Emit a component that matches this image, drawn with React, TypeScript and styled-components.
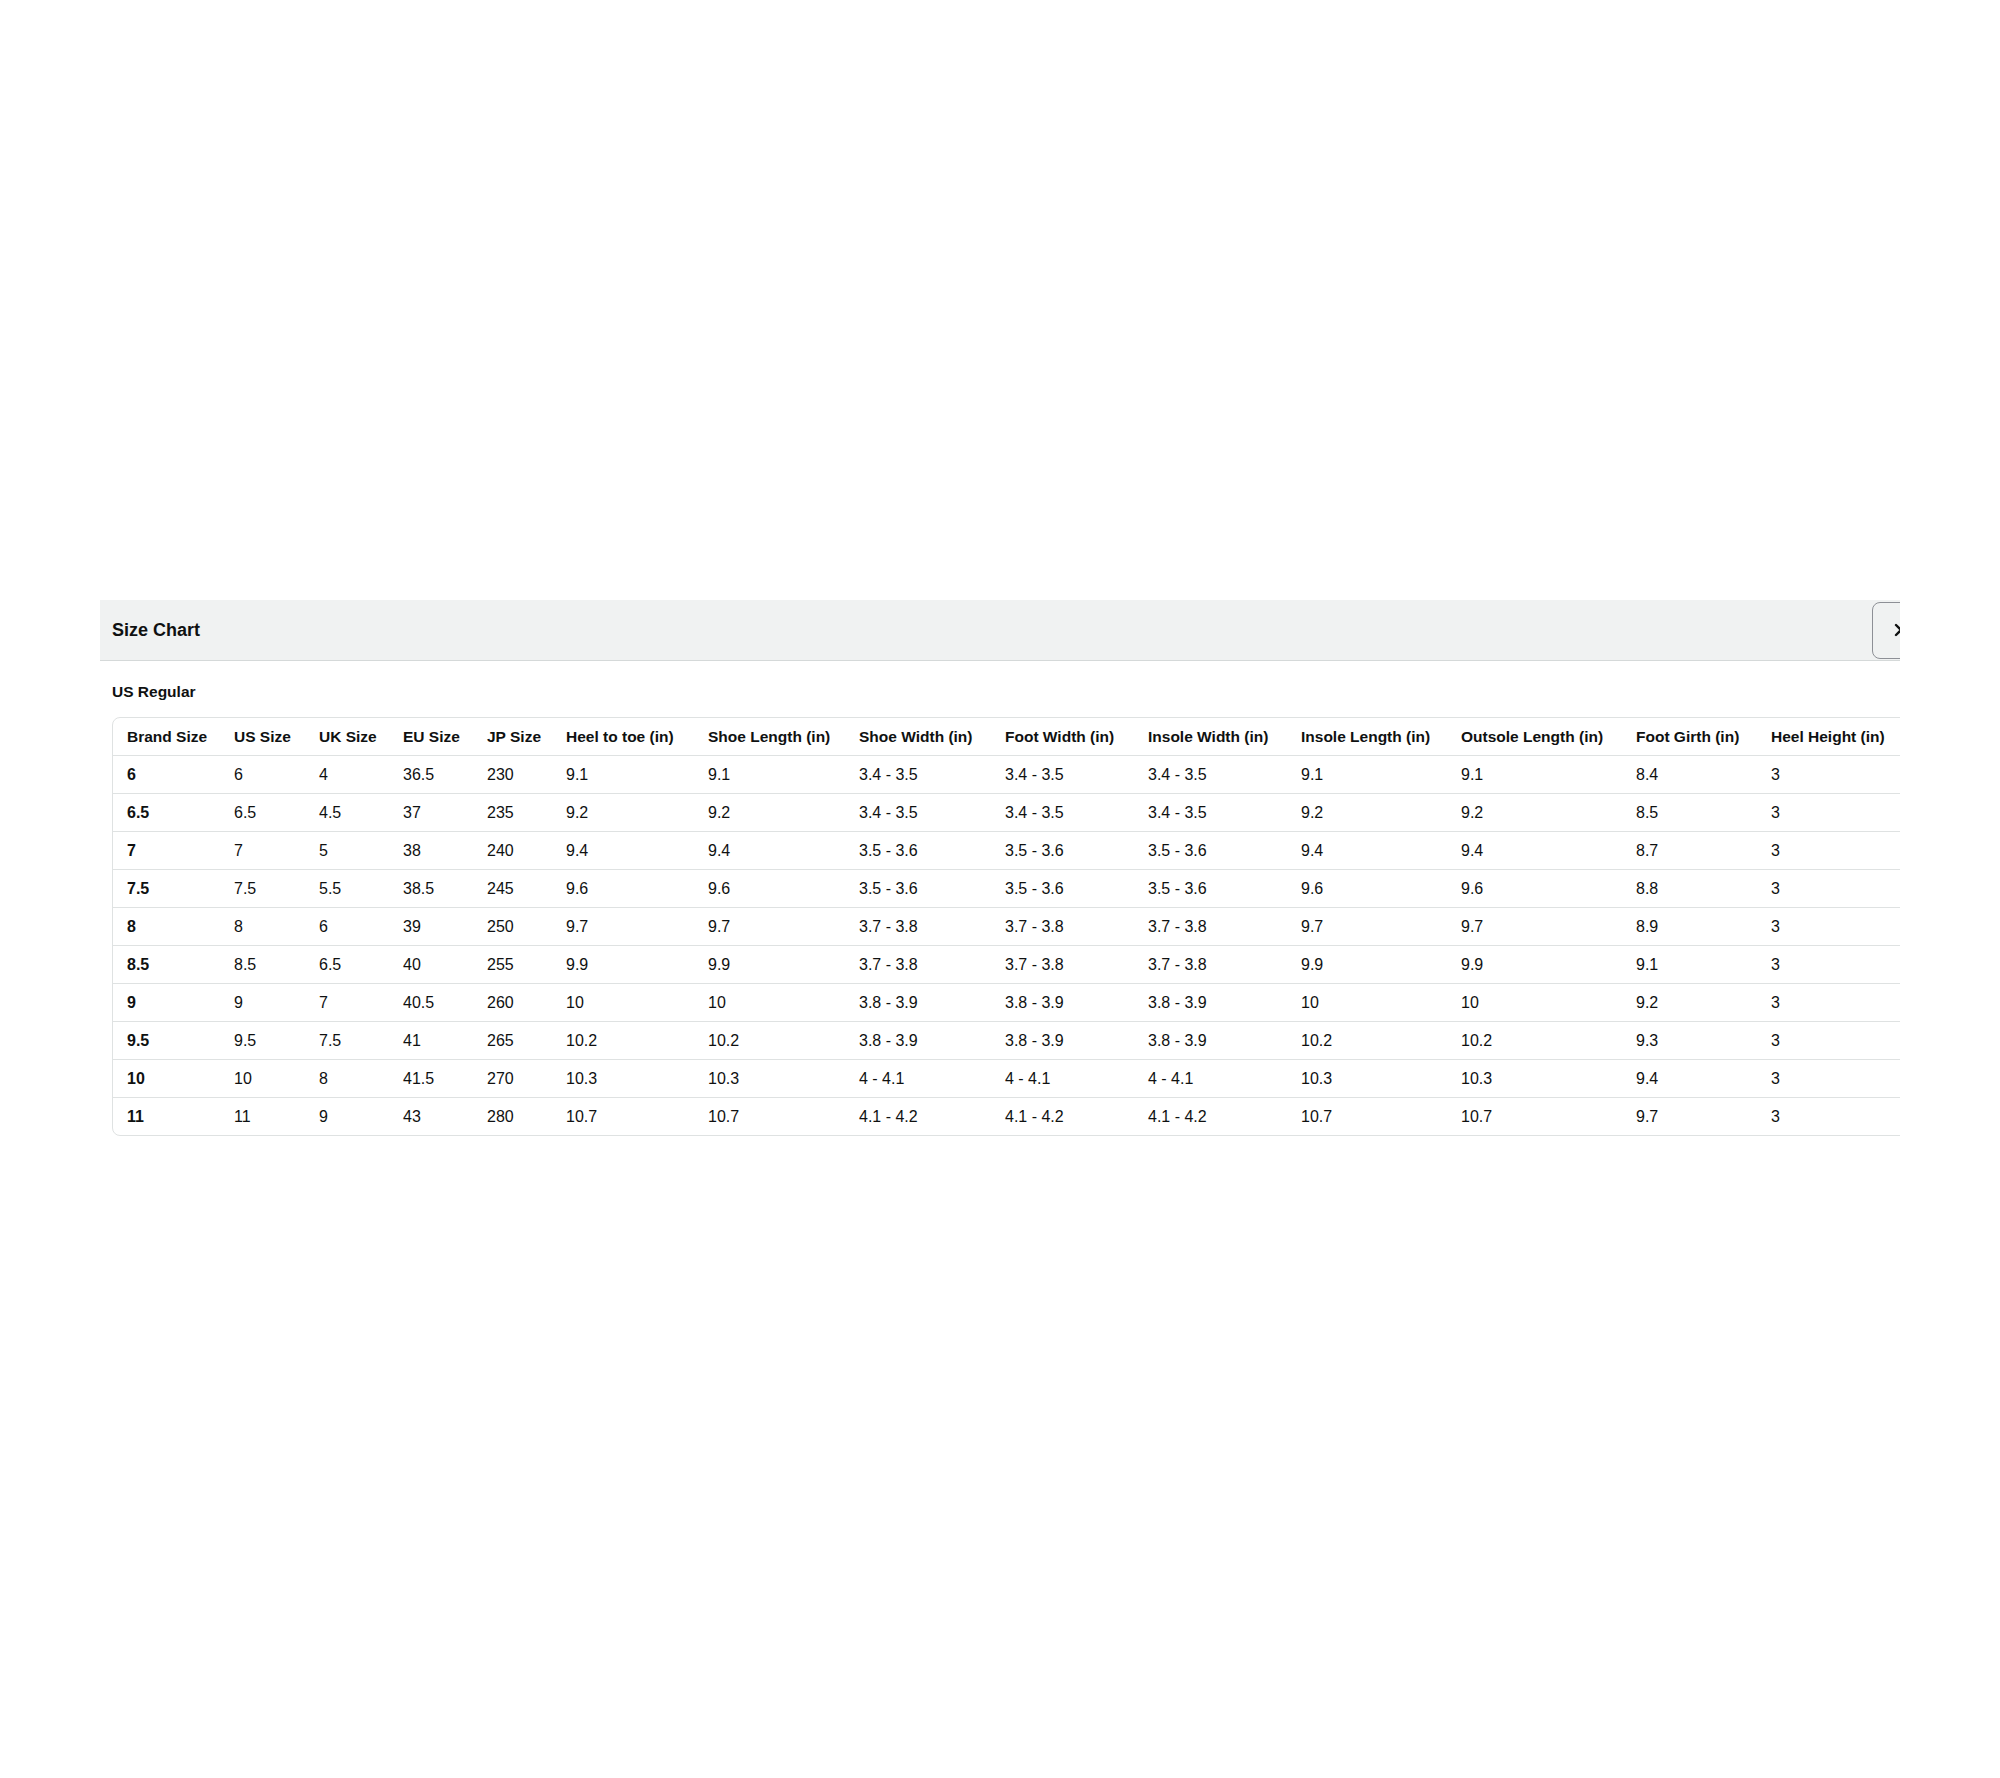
import React from "react";
import styled, { createGlobalStyle } from "styled-components";

const GlobalStyle = createGlobalStyle`
  html, body {
    margin: 0;
    padding: 0;
    background: #ffffff;
  }
  body {
    font-family: "Liberation Sans", Arial, sans-serif;
    color: #0f1111;
  }
`;

const Page = styled.div`
  box-sizing: border-box;
  width: 2000px;
  height: 1778px;
  padding: 600px 0 0 100px;
  background: #ffffff;
  overflow: hidden;
`;

const Viewport = styled.div`
  width: 1800px;
  overflow: hidden;
`;

const Modal = styled.section`
  width: 1832px;
  display: flex;
  flex-direction: column;
`;

const Header = styled.header`
  display: flex;
  align-items: center;
  justify-content: space-between;
  height: 60px;
  padding: 0 3px 0 12px;
  background: #f0f2f2;
  border-bottom: 1px solid #d5d9d9;
`;

const Title = styled.h2`
  margin: 0;
  font-size: 18px;
  line-height: 24px;
  font-weight: 700;
  color: #0f1111;
`;

const CloseButton = styled.button`
  width: 57px;
  height: 57px;
  padding: 0;
  display: flex;
  align-items: center;
  justify-content: center;
  background: #f0f2f2;
  border: 1.5px solid #8d9096;
  border-radius: 8px;
  color: #0f1111;
  cursor: pointer;
`;

const Body = styled.div`
  padding: 21px 0 40px 12px;
`;

const SectionTitle = styled.h3`
  margin: 0 0 15px;
  font-size: 15.5px;
  line-height: 20px;
  font-weight: 700;
  color: #0f1111;
`;

const Table = styled.table`
  border-collapse: separate;
  border-spacing: 0;
  table-layout: fixed;
  border: 1px solid #dfe2e2;
  border-radius: 8px;
`;

const HeadCell = styled.th`
  padding: 8.5px 14px;
  line-height: 20px;
  font-size: 15.5px;
  font-weight: 700;
  text-align: left;
  white-space: nowrap;
  color: #0f1111;
  border-bottom: 1px solid #dfe2e2;
`;

const Row = styled.tr`
  &:last-child td {
    border-bottom: none;
  }
`;

const Cell = styled.td<{ $strong?: boolean }>`
  padding: 8.5px 14px;
  line-height: 20px;
  font-size: 16px;
  font-weight: ${(p) => (p.$strong ? 700 : 400)};
  text-align: left;
  white-space: nowrap;
  color: #0f1111;
  border-bottom: 1px solid #dfe2e2;
`;

const columns: { label: string; width: number }[] = [
  { label: "Brand Size", width: 107 },
  { label: "US Size", width: 85 },
  { label: "UK Size", width: 84 },
  { label: "EU Size", width: 84 },
  { label: "JP Size", width: 79 },
  { label: "Heel to toe (in)", width: 142 },
  { label: "Shoe Length (in)", width: 151 },
  { label: "Shoe Width (in)", width: 146 },
  { label: "Foot Width (in)", width: 143 },
  { label: "Insole Width (in)", width: 153 },
  { label: "Insole Length (in)", width: 160 },
  { label: "Outsole Length (in)", width: 175 },
  { label: "Foot Girth (in)", width: 135 },
  { label: "Heel Height (in)", width: 160 },
];

const rows: string[][] = [
  ["6", "6", "4", "36.5", "230", "9.1", "9.1", "3.4 - 3.5", "3.4 - 3.5", "3.4 - 3.5", "9.1", "9.1", "8.4", "3"],
  ["6.5", "6.5", "4.5", "37", "235", "9.2", "9.2", "3.4 - 3.5", "3.4 - 3.5", "3.4 - 3.5", "9.2", "9.2", "8.5", "3"],
  ["7", "7", "5", "38", "240", "9.4", "9.4", "3.5 - 3.6", "3.5 - 3.6", "3.5 - 3.6", "9.4", "9.4", "8.7", "3"],
  ["7.5", "7.5", "5.5", "38.5", "245", "9.6", "9.6", "3.5 - 3.6", "3.5 - 3.6", "3.5 - 3.6", "9.6", "9.6", "8.8", "3"],
  ["8", "8", "6", "39", "250", "9.7", "9.7", "3.7 - 3.8", "3.7 - 3.8", "3.7 - 3.8", "9.7", "9.7", "8.9", "3"],
  ["8.5", "8.5", "6.5", "40", "255", "9.9", "9.9", "3.7 - 3.8", "3.7 - 3.8", "3.7 - 3.8", "9.9", "9.9", "9.1", "3"],
  ["9", "9", "7", "40.5", "260", "10", "10", "3.8 - 3.9", "3.8 - 3.9", "3.8 - 3.9", "10", "10", "9.2", "3"],
  ["9.5", "9.5", "7.5", "41", "265", "10.2", "10.2", "3.8 - 3.9", "3.8 - 3.9", "3.8 - 3.9", "10.2", "10.2", "9.3", "3"],
  ["10", "10", "8", "41.5", "270", "10.3", "10.3", "4 - 4.1", "4 - 4.1", "4 - 4.1", "10.3", "10.3", "9.4", "3"],
  ["11", "11", "9", "43", "280", "10.7", "10.7", "4.1 - 4.2", "4.1 - 4.2", "4.1 - 4.2", "10.7", "10.7", "9.7", "3"],
];

const tableWidth = columns.reduce((s, c) => s + c.width, 0);

export default function App() {
  return (
    <Page>
      <GlobalStyle />
      <Viewport>
        <Modal>
          <Header>
            <Title>Size Chart</Title>
            <CloseButton aria-label="Close">
              <svg width="14" height="14" viewBox="0 0 14 14" fill="none">
                <path d="M2 2 L12 12 M12 2 L2 12" stroke="#0f1111" strokeWidth="2.4" strokeLinecap="round" />
              </svg>
            </CloseButton>
          </Header>
          <Body>
            <SectionTitle>US Regular</SectionTitle>
            <Table style={{ width: tableWidth }}>
              <colgroup>
                {columns.map((c) => (
                  <col key={c.label} style={{ width: c.width }} />
                ))}
              </colgroup>
              <thead>
                <tr>
                  {columns.map((c) => (
                    <HeadCell key={c.label}>{c.label}</HeadCell>
                  ))}
                </tr>
              </thead>
              <tbody>
                {rows.map((r) => (
                  <Row key={r[0]}>
                    {r.map((v, i) => (
                      <Cell key={i} $strong={i === 0}>
                        {v}
                      </Cell>
                    ))}
                  </Row>
                ))}
              </tbody>
            </Table>
          </Body>
        </Modal>
      </Viewport>
    </Page>
  );
}
